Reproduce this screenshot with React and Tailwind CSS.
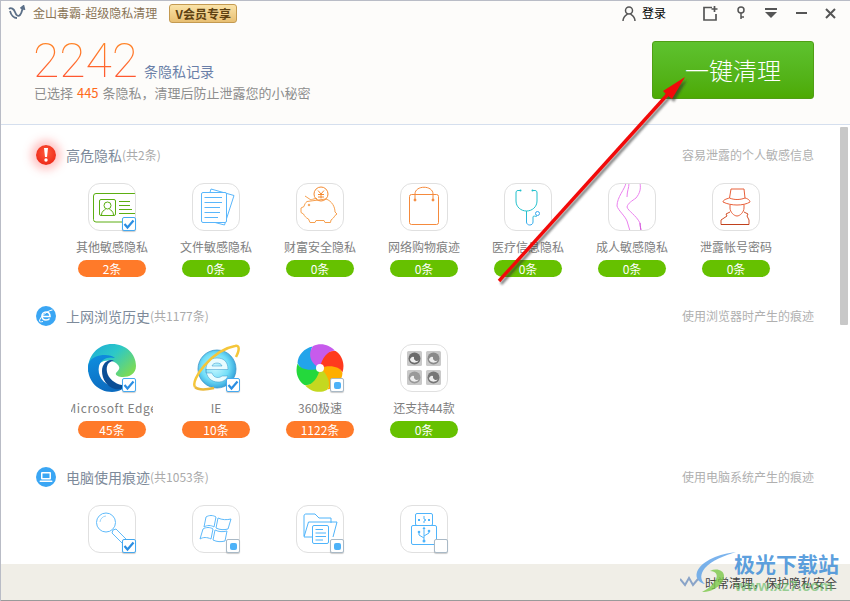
import { Fragment } from "react";

const CJK = "font-['Noto_Sans_CJK_SC','Liberation_Sans',sans-serif]";

// small check box sitting on the icon corner
function Check({ state }) {
  const on = state === "on";
  return (
    <div className={`absolute right-0 bottom-0 w-[14px] h-[14px] rounded-[2px] bg-white border flex items-center justify-center shadow-[0_1px_1px_rgba(0,0,0,0.2)] ${on ? "border-[#45a9f0]" : "border-[#a9b9c6]"}`}>
      {on && (
        <svg width="12" height="12" viewBox="0 0 12 12" fill="none">
          <path d="M1.500 6 L4.500 9.500 L10.500 2.500" stroke="#2b8ee2" strokeWidth="2.200" />
        </svg>
      )}
      {state === "part" && <div className="w-[7px] h-[7px] rounded-[2px] bg-[#4db2f8]" />}
    </div>
  );
}

function Frame({ children }) {
  return (
    <div className="w-[48px] h-[48px] rounded-[12px] border border-[#e0e0e0] bg-white overflow-hidden">
      <svg width="46" height="46" viewBox="1 1 46 46" fill="none">{children}</svg>
    </div>
  );
}

const IdCard = () => (
  <Frame>
    <g stroke="#5cae12" strokeWidth="1">
      <path d="M47 10.500 H8 a2.500 2.500 0 0 0 -2.500 2.500 V36.500 a2.500 2.500 0 0 0 2.500 2.500 H34" />
      <rect x="11.500" y="16.500" width="16" height="16" rx="1.500" />
      <circle cx="19.500" cy="22.500" r="3.500" />
      <path d="M13.500 32 c0 -3.500 2.500 -5 4 -5.500 M25.500 32 c0 -3.500 -2.500 -5 -4 -5.500" />
      <path d="M31 18.500 H42 M31 22.500 H42 M31 26.500 H44 M31 30.500 H47" />
    </g>
  </Frame>
);

const Doc = () => (
  <Frame>
    <g stroke="#59b6fb" strokeWidth="1">
      <path d="M19 6 L42 12.500 L32.500 42 L10 36 Z" fill="#fff" />
      <rect x="9.500" y="9.500" width="25" height="30" rx="1.500" fill="#fff" />
      <path d="M12.500 14.500 H30 M12.500 19.500 H30 M12.500 24.500 H28 M12.500 29.500 H28 M12.500 34.500 H26" />
    </g>
  </Frame>
);

const Piggy = () => (
  <Frame>
    <g stroke="#f6a04f" strokeWidth="1" strokeLinejoin="round">
      <path d="M9 13 L15 17 C17 16 19 15.500 21 15.500 M30 16 C36 18 39 24 39 29 L41 31 L39 32.500 C38 34.500 36.500 36 35 37 L34.500 39.500 H29 L28 37.500 H20 L19 39.500 H14 L12.500 36 C10 35 8.500 33 7.500 31 L5 29.500 V25 L8 23.500 C8.500 21.500 9.500 19.500 11 18.500 Z" />
      <circle cx="25" cy="11" r="7" stroke="#f58a30" />
      <path d="M22 7.500 L25 11 L28 7.500 M22 11.500 H28 M22 14 H28 M25 11 V15.500" stroke="#f58a30" />
      <circle cx="13" cy="22" r="0.800" fill="#f6a04f" />
    </g>
  </Frame>
);

const Bag = () => (
  <Frame>
    <g stroke="#f58a3c" strokeWidth="1">
      <rect x="9.500" y="11.500" width="29" height="30" rx="2" />
      <path d="M15 17 V11 C15 2 33 2 33 11 V17" />
      <circle cx="15" cy="17" r="1" fill="#f58a3c" />
      <circle cx="33" cy="17" r="1" fill="#f58a3c" />
    </g>
  </Frame>
);

const Stetho = () => (
  <Frame>
    <defs>
      <linearGradient id="st" x1="0" y1="0" x2="0" y2="1">
        <stop offset="0" stopColor="#22c4c4" />
        <stop offset="1" stopColor="#38a8f0" />
      </linearGradient>
    </defs>
    <path d="M16 7.500 H14 C12.500 7.500 12 8.500 12 10 V18 C12 24 17 28 22.500 28 C28 28 33 24 33 18 V10 C33 8.500 32.500 7.500 31 7.500 H29" stroke="#22c0cc" strokeWidth="1" />
    <circle cx="16.500" cy="7.500" r="1" fill="#22c0cc" />
    <circle cx="28.500" cy="7.500" r="1" fill="#22c0cc" />
    <path d="M22.500 28 V39 C22.500 43 29 43 29 39 V34 C29 32 32 34 33 33" stroke="url(#st)" strokeWidth="1" />
    <circle cx="33.500" cy="30.500" r="2" stroke="#38a8f0" strokeWidth="1" />
  </Frame>
);

const Legs = () => (
  <Frame>
    <g stroke="#ea80ee" strokeWidth="1">
      <path d="M18 0 C17 6 9 14 9 23 C10 27 17 33 19 38 L22 48" />
      <path d="M21 0 C21 5 19 8 19 14 M32 0 C33 6 32 10 28 15 C24 18 20 20 19 24 C20 28 28 32 32 40 L33 48" />
      <path d="M32 40 C32 44 33 46 33 48" stroke="#d058d8" />
    </g>
  </Frame>
);

const Spy = () => (
  <Frame>
    <g stroke="#e8603a" strokeWidth="1">
      <path d="M19 6 H32 L33 15 C37 16 38 18 38 19 C35 21 30 22 25 22 C20 22 15 21 11 19 C11 17 14 16 17.500 15 Z" />
      <path d="M17.500 15 C22 17 28 17 33 15" />
      <path d="M18 21.500 V25 C18 29 22 33 25 33 C28 33 32 29 32 25 V21.500" />
      <path d="M18 29 L14 31 L15 33 L9 37 V41.500 H37 V37 L35 33 L36 31 L32 29" stroke="#d2502a" />
      <path d="M9 41.500 H37" stroke="#c0401c" />
    </g>
  </Frame>
);

const Edge = () => (
  <svg width="48" height="48" viewBox="0 0 48 48">
    <defs>
      <linearGradient id="eg1" x1="0" y1="0" x2="1" y2="0.700">
        <stop offset="0" stopColor="#1ca8d8" />
        <stop offset="0.500" stopColor="#2cc8c8" />
        <stop offset="1" stopColor="#7ada58" />
      </linearGradient>
      <linearGradient id="eg2" x1="0" y1="0" x2="0.300" y2="1">
        <stop offset="0" stopColor="#0f8fe0" />
        <stop offset="1" stopColor="#0c6cc0" />
      </linearGradient>
    </defs>
    <path d="M24 0 C38 0 48 10 48 22 C48 30 41 33 35 33 C30 33 27 31 28 29 C30 26 33 25 30 21 C26 16 18 15 12 19 C7 22 3 27 0 28 C-1 12 10 0 24 0 Z" fill="url(#eg1)" />
    <path d="M0 24 C0 13 11 11 17 11 C21 11 25 12 27 14 C20 12 13 15 11 22 C9 31 15 40 24 42 C30 43 37 44 42 38 C38 44 31 48 24 48 C10 48 0 37 0 24 Z" fill="url(#eg2)" />
    <path d="M14 27 C14 18 22 14 26 17 C20 17 18 22 19 28 C20 34 27 40 34 41 C37 41 40 40 42 38 C38 44 31 46 27 45 C19 43 14 35 14 27 Z" fill="#0a4e96" />
  </svg>
);

const IE = () => (
  <svg width="48" height="48" viewBox="0 0 48 48" fill="none">
    <defs>
      <radialGradient id="ie" cx="0.450" cy="0.450" r="0.600">
        <stop offset="0" stopColor="#c8f8ff" />
        <stop offset="0.600" stopColor="#72def8" />
        <stop offset="1" stopColor="#2a9ad6" />
      </radialGradient>
    </defs>
    <circle cx="25" cy="25" r="19" fill="url(#ie)" stroke="#3b94c8" strokeWidth="0.800" />
    <path d="M14 25.500 H36 C36 17 31 14 25 14 C18 14 14 19 14 25.500 Z M20 22 C21 18 29 18 30 22 Z" fill="#e8fcff" fillRule="evenodd" stroke="#3b94c8" strokeWidth="0.500" />
    <path d="M14 25 C14 33 19 38 26 38 C31 38 34 36 36 32 H30 C28 34 22 35 20 29 H14 Z" fill="#e8fcff" stroke="#3b94c8" strokeWidth="0.500" />
    <path d="M3 43 C-2 36 20 6 43 2 C48 1 47.500 6 44 13" stroke="#f5c63a" strokeWidth="2.500" />
    <path d="M3 43 C6 46 13 46 22 44" stroke="#eab93c" strokeWidth="2.500" />
  </svg>
);

const PETALS = [
  ["#22a4ea", 280],
  ["#24d83c", 220],
  ["#c4d820", 160],
  ["#ffae00", 100],
  ["#ff3a1e", 40],
  ["#c75bec", -20],
];

const Speed = () => (
  <svg width="48" height="48" viewBox="0 0 48 48">
    {PETALS.map(([c, r]) => (
      <path key={r} d="M24 24 C17 18 16 7 25 1 C33 0 41 5 44 13 C38 10 29 15 24 24 Z" fill={c} transform={`rotate(${r} 24 24)`} />
    ))}
    <circle cx="24" cy="24" r="4" fill="#fff" />
  </svg>
);

const More = () => (
  <Frame>
    {[[7, 7, "#6b6b6b"], [26, 7, "#8a8a8a"], [7, 26, "#999"], [26, 26, "#777"]].map(([x, y, c]) => (
      <g key={`${x}${y}`}>
        <rect x={x} y={y} width="15" height="15" rx="1.500" fill="#c9c9c9" />
        <circle cx={x + 7.5} cy={y + 7.5} r="6" fill={c} />
        <path d={`M${x + 3} ${y + 9} a5 5 0 0 0 9 0 a3 3 0 0 1 -5 -3 a3 3 0 0 0 -4 3`} fill="#eee" />
      </g>
    ))}
  </Frame>
);

const Search = () => (
  <Frame>
    <g stroke="#5fbafa" strokeWidth="1">
      <circle cx="18" cy="17.500" r="9.500" />
      <path d="M12 17 a6.500 6.500 0 0 1 6 -6" stroke="#9bd4fb" />
      <path d="M25 25 L28 24 L41 37 L37 41 L24 28 Z" />
    </g>
  </Frame>
);

const Windows = () => (
  <Frame>
    <g stroke="#5fbafa" strokeWidth="1" strokeLinejoin="round">
      <path d="M14 12 C17 10 21 10 24 12 L22 22 C19 20 15 20 12 22 Z" />
      <path d="M26 13 C30 15 35 15 39 14 L36 24 C32 25 28 25 24 23 Z" />
      <path d="M11 24 C14 22 18 22 21 24 L19 34 C15 32 11 32 8 34 Z" />
      <path d="M23 25 C27 27 31 27 35 26 L33 36 C29 37 25 37 21 35 Z" />
    </g>
  </Frame>
);

const Folder = () => (
  <Frame>
    <g stroke="#4fb4fb" strokeWidth="1" strokeLinejoin="round">
      <path d="M8 31 V11 C8 9.500 9 9 10 9 H19 L23 13 H35 V18" />
      <path d="M8 32 L12.500 17 H41 L37 32" />
      <path d="M8 32 H16" />
      <rect x="16.500" y="20.500" width="16" height="18" rx="1.500" fill="#fff" />
      <path d="M19.500 24.500 H27 M19.500 28 H30 M19.500 31.500 H30 M19.500 35 H27" />
    </g>
  </Frame>
);

const Usb = () => (
  <Frame>
    <g stroke="#4fb4fb" strokeWidth="1">
      <rect x="15.500" y="8.500" width="17" height="12" rx="1.500" />
      <path d="M24 11 V14 L26 15 L24 16 V18" />
      <rect x="11.500" y="20.500" width="25" height="19" rx="1.500" />
      <path d="M24 23 V36 M24 33 L19 30 V27 M24 31 L29 28 V26" />
    </g>
    <g fill="#4fb4fb">
      <rect x="18" y="14" width="2" height="2" />
      <rect x="28" y="14" width="2" height="2" />
      <circle cx="24" cy="36" r="1.500" />
      <circle cx="19" cy="27" r="1.300" />
      <circle cx="29" cy="26" r="1.300" />
      <path d="M22.500 24 L24 21.500 L25.500 24 Z" />
    </g>
  </Frame>
);

const SECTIONS = [
  {
    title: "高危隐私",
    count: "(共2条)",
    hint: "容易泄露的个人敏感信息",
    kind: "alert",
    items: [
      { name: "其他敏感隐私", n: "2条", hot: true, Icon: IdCard, check: "on" },
      { name: "文件敏感隐私", n: "0条", Icon: Doc },
      { name: "财富安全隐私", n: "0条", Icon: Piggy },
      { name: "网络购物痕迹", n: "0条", Icon: Bag },
      { name: "医疗信息隐私", n: "0条", Icon: Stetho },
      { name: "成人敏感隐私", n: "0条", Icon: Legs },
      { name: "泄露帐号密码", n: "0条", Icon: Spy },
    ],
  },
  {
    title: "上网浏览历史",
    count: "(共1177条)",
    hint: "使用浏览器时产生的痕迹",
    kind: "ie",
    items: [
      { name: "Microsoft Edge", n: "45条", hot: true, Icon: Edge, check: "on", wide: true },
      { name: "IE", n: "10条", hot: true, Icon: IE, check: "on" },
      { name: "360极速", n: "1122条", hot: true, Icon: Speed, check: "part" },
      { name: "还支持44款", n: "0条", Icon: More },
    ],
  },
  {
    title: "电脑使用痕迹",
    count: "(共1053条)",
    hint: "使用电脑系统产生的痕迹",
    kind: "pc",
    items: [
      { name: "系统搜索记录", n: "", Icon: Search, check: "on" },
      { name: "系统使用痕迹", n: "", Icon: Windows, check: "part" },
      { name: "文件访问记录", n: "", Icon: Folder, check: "part" },
      { name: "USB使用记录", n: "", Icon: Usb, check: "off" },
    ],
  },
];

function SectionIcon({ kind }) {
  if (kind === "alert") {
    return (
      <div className="w-[20px] h-[20px] rounded-full bg-[radial-gradient(circle_at_50%_40%,#ff5a3a,#e81a10)] shadow-[0_0_9px_5px_rgba(255,90,90,0.35)] flex items-center justify-center">
        <svg width="6" height="14" viewBox="0 0 6 14">
          <path d="M1 0 H5 L4 9 H2 Z" fill="#fff" />
          <circle cx="3" cy="12" r="1.700" fill="#fff" />
        </svg>
      </div>
    );
  }
  return (
    <div className="w-[20px] h-[20px] rounded-full bg-[#3aa6f4] flex items-center justify-center">
      {kind === "ie" ? (
        <svg width="16" height="14" viewBox="0 0 16 14" fill="none" stroke="#fff">
          <path d="M4.500 7.500 H12 C12 4 10 3 8 3 C5.500 3 4 5 4 7 C4 10 6 11 8 11 C9.500 11 11 10.500 11.500 9.500" strokeWidth="1.600" />
          <path d="M14.500 1 C11 1 2 7 1.500 12 C1.500 13 3 13 5 12.500" strokeWidth="1" />
        </svg>
      ) : (
        <svg width="14" height="12" viewBox="0 0 14 12">
          <rect x="2" y="1" width="10" height="7.500" rx="1" fill="#fff" />
          <rect x="3.500" y="2.500" width="7" height="4.500" fill="#3aa6f4" />
          <rect x="0.500" y="9.500" width="13" height="1.500" rx="0.700" fill="#fff" />
        </svg>
      )}
    </div>
  );
}

function Item({ item }) {
  const { name, n, hot, Icon, check, wide } = item;
  return (
    <div className="w-[104px] flex flex-col items-center shrink-0">
      <div className="relative w-[48px] h-[48px]">
        <Icon />
        {check && <Check state={check} />}
      </div>
      <div className={`w-[82px] h-4 mt-2 text-[12px] leading-4 text-[#808080] text-center whitespace-nowrap overflow-hidden flex justify-center ${wide ? "tracking-[0.6px]" : ""}`}>
        {n && <span className="shrink-0">{name}</span>}
      </div>
      <div className={`w-[68px] h-[17px] mt-[5px] rounded-full text-white text-[12px] leading-[17px] text-center ${n ? "" : "invisible"} ${hot ? "bg-[#ff7a29]" : "bg-[#66c100]"}`}>
        {n}
      </div>
    </div>
  );
}

function Section({ s }) {
  return (
    <section className="pb-[9px] pt-[20px]">
      <div className="flex items-center h-5 pl-[35px] pr-[26px]">
        <SectionIcon kind={s.kind} />
        <span className="ml-[10px] text-[14px] text-[#7d8a9a]">{s.title}</span>
        <span className="text-[12px] text-[#aaa]">{s.count}</span>
        <span className="ml-auto text-[12px] text-[#b0b0b0]">{s.hint}</span>
      </div>
      <div className="flex pl-[59px] mt-[18px]">
        {s.items.map((it) => (
          <Item key={it.name} item={it} />
        ))}
      </div>
    </section>
  );
}

function TopBar() {
  return (
    <div className="flex items-center h-[24px] pl-[7px] pr-[14px]">
      <svg width="18" height="16" viewBox="0 0 18 16" fill="none" stroke="#5c7088" strokeWidth="1.800">
        <path d="M1 4 C3 2 6 4 7 7 C8 10 10 12 12 10 C14 8 14 5 15 2 M12.500 3.500 L15.500 1 L16.500 5" />
        <path d="M2 6 C3 10 6 13 9 13" />
      </svg>
      <span className="ml-[7px] text-[12px] text-[#8a7456]">金山毒霸-超级隐私清理</span>
      <span className="ml-[12px] w-[68px] h-[19px] rounded-[3px] border border-[#c49a50] bg-gradient-to-b from-[#fae3a8] to-[#e8bf72] text-[12px] leading-[17px] font-bold text-[#5e4212] text-center">
        V会员专享
      </span>
      <svg className="ml-auto" width="14" height="15" viewBox="0 0 14 15" fill="none" stroke="#555" strokeWidth="1.500">
        <circle cx="7" cy="4.500" r="3.500" />
        <path d="M1 15 C1 10.500 4 9 5.500 8 M13 15 C13 10.500 10 9 8.500 8" />
      </svg>
      <span className="ml-[6px] text-[12px] text-black">登录</span>
      <svg className="ml-[37px]" width="15" height="15" viewBox="0 0 15 15" fill="none" stroke="#555" strokeWidth="1.700">
        <path d="M9 1.500 H1 V14 H13 V8" />
        <path d="M11.500 0 V6 M8.500 3 H14.500" />
      </svg>
      <svg className="ml-[18px]" width="10" height="14" viewBox="0 0 10 14" fill="none" stroke="#555" strokeWidth="1.500">
        <circle cx="5" cy="4" r="3" />
        <path d="M5 7 V13 M5 11 H8" />
      </svg>
      <svg className="ml-[19px]" width="12" height="11" viewBox="0 0 12 11" fill="#555">
        <rect x="0" y="0" width="12" height="2" />
        <path d="M0 4 H12 L6 10 Z" />
      </svg>
      <div className="ml-[19px] w-[11px] h-[2px] bg-[#555]" />
      <svg className="ml-[18px]" width="11" height="11" viewBox="0 0 11 11" stroke="#555" strokeWidth="2">
        <path d="M1 1 L10 10 M10 1 L1 10" />
      </svg>
    </div>
  );
}

function Summary() {
  return (
    <div className="flex pl-[33px] pr-[36px]">
      <div className="flex-1 pt-[12px]">
        <div className="flex items-end h-[48px]">
          <span className="-ml-px text-[48px] leading-[48px] font-['Roboto',sans-serif] font-thin bg-gradient-to-b from-[#ff8a22] to-[#ff4a32] bg-clip-text text-transparent">
            2242
          </span>
          <span className="ml-[6px] mb-[4px] text-[14px] leading-[20px] text-[#6a7fa8]">条隐私记录</span>
        </div>
        <div className="-mt-px text-[13px] leading-[18px] text-[#8e8e8e]">
          已选择 <span className="mx-px text-[#ff6a1a]">445</span> 条隐私，清理后防止泄露您的小秘密
        </div>
      </div>
      <div className="mt-[16px] w-[162px] h-[58px] rounded-[3px] bg-gradient-to-b from-[#5ec22e] to-[#4daa02] border border-[#4f9f14] text-white text-[24px] font-light flex items-center justify-center">
        一键清理
      </div>
    </div>
  );
}

function Arrow() {
  return (
    <svg className="absolute left-[-1px] top-[-1px] pointer-events-none" width="850" height="601" viewBox="0 0 850 601" fill="none">
      <defs>
        <filter id="soft" x="-10%" y="-10%" width="120%" height="120%">
          <feGaussianBlur stdDeviation="1" />
        </filter>
      </defs>
      <g opacity="0.600" transform="translate(2 3)" filter="url(#soft)">
        <path d="M499 281 L668 94" stroke="#333" strokeWidth="3" />
        <path d="M685 77 L663 91 L672 99 Z" fill="#333" />
      </g>
      <path d="M499 281 L668 94" stroke="#f20a0a" strokeWidth="3.400" />
      <path d="M685 77 L663 91 L667 95 L672 99 Z" fill="#f20a0a" />
    </svg>
  );
}

function Watermark() {
  return (
    <div className="absolute left-[679px] top-[549px] w-[170px] h-[46px] pointer-events-none">
      <svg className="absolute left-0 top-0" width="60" height="46" viewBox="0 0 60 46" fill="none">
        <path d="M56 2 C40 4 22 10 17 22 C15 28 19 33 25 34 C20 30 20 24 25 18 C32 10 44 6 56 2 Z" fill="#5aa0e8" opacity="0.800" />
        <path d="M22 42 C34 42 44 34 44 26 C44 20 36 18 30 21 C36 21 38 25 36 29 C33 35 28 39 22 42 Z" fill="#7cc84a" opacity="0.800" />
        <path d="M0 29 L5 35 L9 28 L13 35 L18 29" stroke="#8aa4c8" strokeWidth="2" />
      </svg>
      <span className="absolute left-[54px] top-[1px] text-[21px] leading-[24px] font-bold text-[#3f8fd8]/85 whitespace-nowrap">极光下载站</span>
      <span className="absolute left-[55px] top-[28px] text-[15px] leading-[16px] font-bold text-[#5cb85c]/60 font-['Liberation_Sans',sans-serif] whitespace-nowrap">www.xz7.com</span>
    </div>
  );
}

export default function App() {
  return (
    <div className={`relative w-[850px] h-[601px] overflow-hidden bg-white flex flex-col border-t border-l border-[#b9bcc6] ${CJK}`}>
      <header className="h-[124px] shrink-0 bg-[#fdfcfa] border-b border-[#d5dfee]">
        <TopBar />
        <Summary />
      </header>

      <main className="flex-1 min-h-0 flex">
        <div className="flex-1 min-w-0 overflow-hidden">
          {SECTIONS.map((s) => (
            <Fragment key={s.title}>
              <Section s={s} />
            </Fragment>
          ))}
        </div>
        <div className="w-[10px] shrink-0 pt-[2px] pr-[2px]">
          <div className="w-[8px] h-[198px] rounded-[1px] bg-[#c8c8c8]" />
        </div>
      </main>

      <footer className="h-[37px] shrink-0 bg-[#f0eee7] border-b border-[#9a9a9a] flex items-center justify-end pr-[13px]">
        <span className="text-[12px] text-[#444] mt-[1px]">时常清理，保护隐私安全</span>
      </footer>

      <Arrow />
      <Watermark />
    </div>
  );
}
